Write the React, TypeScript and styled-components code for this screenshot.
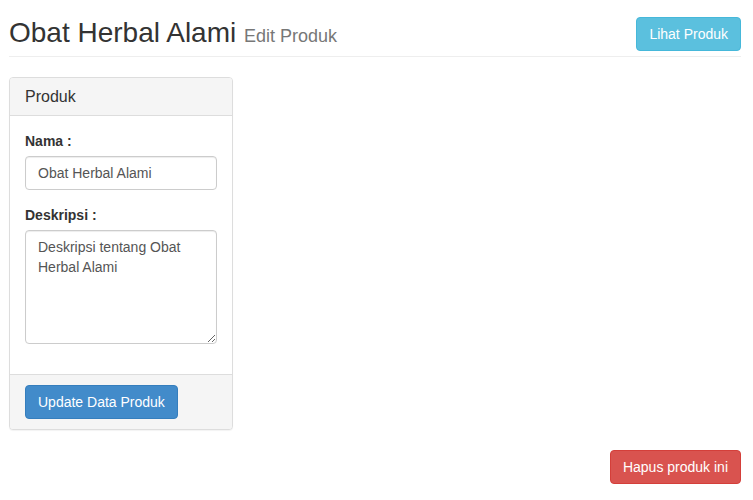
import React from "react";
import styled, { createGlobalStyle } from "styled-components";

const Global = createGlobalStyle`
  * { box-sizing: border-box; }
  html, body { margin: 0; padding: 0; background: #fff; }
  body {
    font-family: "Liberation Sans", Arial, Helvetica, sans-serif;
    font-size: 14px;
    line-height: 1.42857143;
    color: #333;
  }
`;

const Page = styled.div`
  padding: 0 12px 0 9px;
`;

const Header = styled.div`
  display: flex;
  justify-content: space-between;
  align-items: flex-start;
  padding: 17px 0 5px;
  border-bottom: 1px solid #eee;
`;

const Title = styled.h1`
  margin: 0;
  font-size: 28px;
  font-weight: 500;
  line-height: 31px;
  height: 31px;
  color: #333;
`;

const Sub = styled.small`
  font-size: 18px;
  font-weight: 400;
  line-height: 1;
  color: #777;
`;

type Variant = "info" | "primary" | "danger";
const palette: Record<Variant, [string, string]> = {
  info: ["#5bc0de", "#46b8da"],
  primary: ["#428bca", "#357ebd"],
  danger: ["#d9534f", "#d43f3a"],
};

const Button = styled.button<{ $v: Variant }>`
  display: inline-block;
  font-family: inherit;
  font-size: 14px;
  line-height: 20px;
  padding: 6px 12px;
  border-radius: 4px;
  color: #fff;
  background: ${(p) => palette[p.$v][0]};
  border: 1px solid ${(p) => palette[p.$v][1]};
  cursor: pointer;
  white-space: nowrap;
`;

const Panel = styled.div`
  width: 224px;
  margin-top: 20px;
  border: 1px solid #ddd;
  border-radius: 4px;
  background: #fff;
  box-shadow: 0 1px 1px rgba(0, 0, 0, 0.05);
`;

const PanelHeading = styled.div`
  padding: 10px 15px;
  background: #f5f5f5;
  border-bottom: 1px solid #ddd;
  border-radius: 3px 3px 0 0;
`;

const PanelTitle = styled.h3`
  margin: 0;
  font-size: 16px;
  font-weight: 500;
  line-height: 17px;
  color: #333;
`;

const PanelBody = styled.div`
  padding: 15px;
`;

const FormGroup = styled.div`
  margin-bottom: 15px;
`;

const Label = styled.label`
  display: block;
  margin-bottom: 5px;
  font-weight: 700;
`;

const fieldCss = `
  display: block;
  width: 100%;
  padding: 6px 12px;
  font-family: inherit;
  font-size: 14px;
  line-height: 20px;
  color: #555;
  background: #fff;
  border: 1px solid #ccc;
  border-radius: 4px;
  box-shadow: inset 0 1px 1px rgba(0, 0, 0, 0.075);
  outline: none;
  margin: 0;
`;

const Input = styled.input`
  ${fieldCss}
  height: 34px;
`;

const TextArea = styled.textarea`
  ${fieldCss}
  height: 114px;
  resize: vertical;
`;

const PanelFooter = styled.div`
  padding: 10px 15px;
  background: #f5f5f5;
  border-top: 1px solid #ddd;
  border-radius: 0 0 3px 3px;
`;

const Actions = styled.div`
  display: flex;
  justify-content: flex-end;
  margin-top: 20px;
`;

export default function App() {
  return (
    <>
      <Global />
      <Page>
        <Header>
          <Title>
            Obat Herbal Alami <Sub>Edit Produk</Sub>
          </Title>
          <Button $v="info">Lihat Produk</Button>
        </Header>
        <Panel>
          <PanelHeading>
            <PanelTitle>Produk</PanelTitle>
          </PanelHeading>
          <PanelBody>
            <FormGroup>
              <Label>Nama :</Label>
              <Input defaultValue="Obat Herbal Alami" />
            </FormGroup>
            <FormGroup>
              <Label>Deskripsi :</Label>
              <TextArea rows={5} defaultValue="Deskripsi tentang Obat Herbal Alami" />
            </FormGroup>
          </PanelBody>
          <PanelFooter>
            <Button $v="primary">Update Data Produk</Button>
          </PanelFooter>
        </Panel>
        <Actions>
          <Button $v="danger">Hapus produk ini</Button>
        </Actions>
      </Page>
    </>
  );
}
